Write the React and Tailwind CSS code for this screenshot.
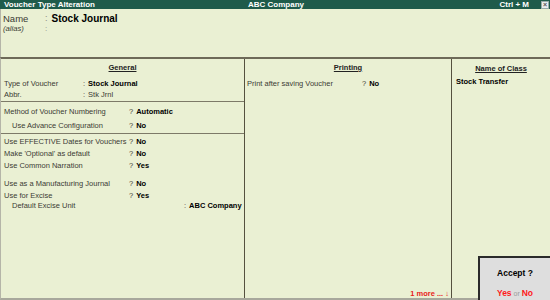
import React from "react";

const font = { fontFamily: '"Liberation Sans", Arial, sans-serif' };

const Row = ({ label, sep = "?", value, bold = true, indent = false, labelW = "w-[125px]", h = "h-[12px]" }) => (
  <div className={`flex items-center whitespace-nowrap ${h} ${indent ? "pl-[11px]" : "pl-[3px]"}`}>
    <span className={`${labelW} shrink-0 text-[#3b3b33]`}>{label}</span>
    <span className="text-[#3b3b33] mr-[3px]">{sep}</span>
    <span className={bold ? "font-bold text-black" : "text-[#3b3b33]"}>{value}</span>
  </div>
);

const App = () => {
  return (
    <div
      className="relative w-[550px] h-[300px] overflow-hidden bg-[#eaf0d3] flex flex-col text-[7.5px] leading-none"
      style={font}
    >
      {/* title bar */}
      <div className="h-[9px] shrink-0 bg-[#1f5b4b] text-white font-bold text-[8px] flex items-center px-[4px]">
        <span className="w-[244px]">Voucher Type Alteration</span>
        <span>ABC Company</span>
        <span className="ml-auto mr-[12px]">Ctrl + M</span>
        <span className="w-[8px] h-[8px] bg-[#e9ecef] border border-[#9aa] text-[#555] text-[7px] flex items-center justify-center mr-[-3px]">
          ×
        </span>
      </div>

      {/* name area */}
      <div className="h-[48px] shrink-0 border-l border-[#b5b5a8] pt-[4px]">
        <div className="flex items-center h-[11px] pl-[2px]">
          <span className="w-[42px] text-[9.5px] text-[#3b3b33]">Name</span>
          <span className="text-[#8a8a80] text-[9px] mr-[4px]">:</span>
          <span className="font-bold text-[10px] text-black">Stock Journal</span>
        </div>
        <div className="flex items-center h-[10px] pl-[2px]">
          <span className="w-[42px] italic text-[7.7px] text-[#3b3b33]">(alias)</span>
          <span className="text-[#8a8a80] text-[8px]">:</span>
        </div>
      </div>

      {/* body */}
      <div className="flex flex-1 border-t-2 border-[#6e6a58] border-l border-l-[#b5b5a8] border-b-2 border-b-[#a8a89c]">
        {/* General */}
        <div className="w-[244px] shrink-0 border-r border-[#55513f] flex flex-col">
          <div className="pt-[5px] h-[16px] text-center">
            <span className="font-bold underline text-[#222] underline-offset-1">General</span>
          </div>
          <div className="pt-[3px] pb-[1px]">
            <Row label="Type of Voucher" sep=":" value="Stock Journal" labelW="w-[79px]" h="h-[11px]" />
            <Row label="Abbr." sep=":" value="Stk Jrnl" bold={false} labelW="w-[79px]" h="h-[11px]" />
          </div>
          <div className="border-t border-[#7d7a68] pt-[3px]">
            <div className="h-[13px] flex items-center">
              <Row label="Method of Voucher Numbering" value="Automatic" />
            </div>
            <div className="h-[15px] flex items-center">
              <Row label="Use Advance Configuration" value="No" indent labelW="w-[117px]" />
            </div>
          </div>
          <div className="border-t border-[#7d7a68] pt-[2px]">
            <Row label="Use EFFECTIVE Dates for Vouchers" value="No" />
            <Row label="Make 'Optional' as default" value="No" />
            <Row label="Use Common Narration" value="Yes" />
            <div className="h-[6px]" />
            <Row label="Use as a Manufacturing Journal" value="No" />
            <Row label="Use for Excise" value="Yes" h="h-[11px]" />
            <Row label="Default Excise Unit" sep=":" value="ABC Company" indent labelW="w-[172px]" h="h-[10px]" />
          </div>
        </div>

        {/* Printing */}
        <div className="w-[207px] shrink-0 border-r border-[#55513f] flex flex-col">
          <div className="pt-[5px] h-[16px] text-center">
            <span className="font-bold underline text-[#222] underline-offset-1">Printing</span>
          </div>
          <div className="pt-[3px]">
            <div className="flex items-center h-[11px] pl-[2px] whitespace-nowrap">
              <span className="w-[115px] text-[#3b3b33]">Print after saving Voucher</span>
              <span className="text-[#3b3b33] mr-[3px]">?</span>
              <span className="font-bold text-black">No</span>
            </div>
          </div>
          <div className="mt-auto mb-[1px] flex justify-end pr-[2px]">
            <span className="text-[#e8201a] font-bold">1 more ... ↓</span>
          </div>
        </div>

        {/* Name of Class */}
        <div className="flex-1 flex flex-col">
          <div className="pt-[6px] h-[16px] text-center">
            <span className="font-bold underline text-[#222] underline-offset-1">Name of Class</span>
          </div>
          <div className="pt-[3px] pl-[4px] h-[11px] flex items-center">
            <span className="font-bold text-black">Stock Transfer</span>
          </div>
        </div>
      </div>

      {/* accept dialog */}
      <div className="absolute left-[478px] top-[256px] w-[74px] h-[46px] bg-[#dedede] border-2 border-[#2a2a2a] flex flex-col items-center">
        <span className="mt-[11px] font-bold text-[8.5px] text-black">Accept ?</span>
        <span className="mt-[11px] text-[8.5px] font-bold">
          <span className="text-[#ff1a1a]">Yes</span>
          <span className="text-[#9a9a9a] font-normal text-[7px]"> or </span>
          <span className="text-[#ff1a1a]">No</span>
        </span>
      </div>
    </div>
  );
};

export default App;
